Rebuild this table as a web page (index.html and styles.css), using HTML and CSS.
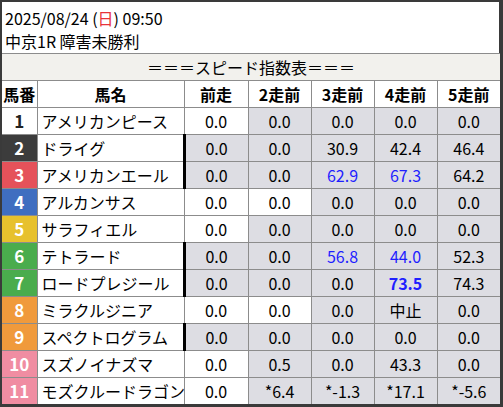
FILE: index.html
```html
<!DOCTYPE html>
<html lang="ja">
<head>
<meta charset="utf-8">
<link rel="stylesheet" href="styles.css">
</head>
<body>
<div class="frame">
  <div class="info">
    <div class="line">2025/08/24 (<span class="sun">日</span>) 09:50</div>
    <div class="line">中京1R 障害未勝利</div>
  </div>
  <table class="grid">
    <colgroup>
      <col class="c-no"><col class="c-name"><col class="c-v1"><col class="c-v"><col class="c-v"><col class="c-v"><col class="c-v">
    </colgroup>
    <tr><th colspan="7" class="title">＝＝＝スピード指数表＝＝＝</th></tr>
    <tr class="head"><th>馬番</th><th>馬名</th><th>前走</th><th>2走前</th><th>3走前</th><th>4走前</th><th>5走前</th></tr>
    <tr><td class="no w1">1</td><td class="name">アメリカンピース</td><td class="v">0.0</td><td class="v g">0.0</td><td class="v g">0.0</td><td class="v g">0.0</td><td class="v g">0.0</td></tr>
    <tr><td class="no w2">2</td><td class="name">ドライグ</td><td class="v g bar">0.0</td><td class="v g">0.0</td><td class="v g">30.9</td><td class="v g">42.4</td><td class="v g">46.4</td></tr>
    <tr><td class="no w3">3</td><td class="name">アメリカンエール</td><td class="v g bar">0.0</td><td class="v g">0.0</td><td class="v g blue">62.9</td><td class="v g blue">67.3</td><td class="v g">64.2</td></tr>
    <tr><td class="no w4">4</td><td class="name">アルカンサス</td><td class="v">0.0</td><td class="v">0.0</td><td class="v g">0.0</td><td class="v g">0.0</td><td class="v g">0.0</td></tr>
    <tr><td class="no w5">5</td><td class="name">サラフィエル</td><td class="v">0.0</td><td class="v g">0.0</td><td class="v g">0.0</td><td class="v g">0.0</td><td class="v g">0.0</td></tr>
    <tr><td class="no w6">6</td><td class="name">テトラード</td><td class="v g bar">0.0</td><td class="v g">0.0</td><td class="v g blue">56.8</td><td class="v g blue">44.0</td><td class="v g">52.3</td></tr>
    <tr><td class="no w6">7</td><td class="name">ロードプレジール</td><td class="v g bar">0.0</td><td class="v g">0.0</td><td class="v g">0.0</td><td class="v g blue bold">73.5</td><td class="v g">74.3</td></tr>
    <tr><td class="no w8">8</td><td class="name">ミラクルジニア</td><td class="v">0.0</td><td class="v">0.0</td><td class="v g">0.0</td><td class="v g">中止</td><td class="v g">0.0</td></tr>
    <tr><td class="no w8">9</td><td class="name">スペクトログラム</td><td class="v g bar">0.0</td><td class="v g">0.0</td><td class="v g">0.0</td><td class="v g">0.0</td><td class="v g">0.0</td></tr>
    <tr><td class="no w10">10</td><td class="name">スズノイナズマ</td><td class="v">0.0</td><td class="v g">0.5</td><td class="v g">0.0</td><td class="v g">43.3</td><td class="v g">0.0</td></tr>
    <tr><td class="no w10">11</td><td class="name">モズクルードラゴン</td><td class="v">0.0</td><td class="v g">*6.4</td><td class="v g">*-1.3</td><td class="v g">*17.1</td><td class="v g">*-5.6</td></tr>
  </table>
</div>
</body>
</html>
```
FILE: styles.css
```css
html, body {
  margin: 0;
  padding: 0;
  background: #fff;
}
body {
  font-family: "Noto Sans CJK JP", "Noto Sans", sans-serif;
  font-size: 16px;
  color: #000;
}
.frame {
  width: 497px;
  border-top: 2px solid #3a3a3a;
  border-left: 2px solid #3a3a3a;
  border-right: 4px solid #3a3a3a;
  border-bottom: 3px solid #3a3a3a;
  background: #fff;
}
.info {
  height: 51px;
  padding: 5px 0 0 3px;
  box-sizing: border-box;
}
.line {
  line-height: 23px;
  height: 23px;
}
.sun {
  color: #e8333a;
}
.grid {
  border-collapse: collapse;
  table-layout: fixed;
  width: 497px;
}
.c-no { width: 35px; }
.c-name { width: 147px; }
.c-v1 { width: 64px; }
.c-v { width: 63px; }
.grid th, .grid td {
  border: 1px solid #8c8c8c;
  height: 26px;
  padding: 0;
  line-height: 20px;
  white-space: nowrap;
  overflow: hidden;
}
.grid tr:first-child th { border-top: 1px solid #8c8c8c; }
.grid th:first-child, .grid td:first-child { border-left: none; }
.grid th:last-child, .grid td:last-child { border-right: none; }
.grid tr:last-child td { border-bottom: none; }
.title {
  background: #f2f1ed;
  font-weight: normal;
  text-align: center;
}
.head th {
  background: #fff;
  font-weight: bold;
  text-align: center;
}
.no {
  text-align: center;
  font-weight: bold;
  color: #fff;
  font-size: 17px;
}
.w1 { background: #fff; color: #222; }
.w2 { background: #3c3c3c; }
.w3 { background: #e5525a; }
.w4 { background: #3f6ec0; }
.w5 { background: #e7c12d; }
.w6 { background: #4aac4d; }
.w8 { background: #f09a3c; }
.w10 { background: #f08da2; }
.name {
  padding-left: 4px !important;
  text-align: left;
}
.v {
  text-align: center;
  background: #fff;
}
.v.g { background: #dddde3; }
.v.bar { border-left: 3px solid #000; }
.blue { color: #1f1fff; }
.bold { font-weight: bold; }
```
